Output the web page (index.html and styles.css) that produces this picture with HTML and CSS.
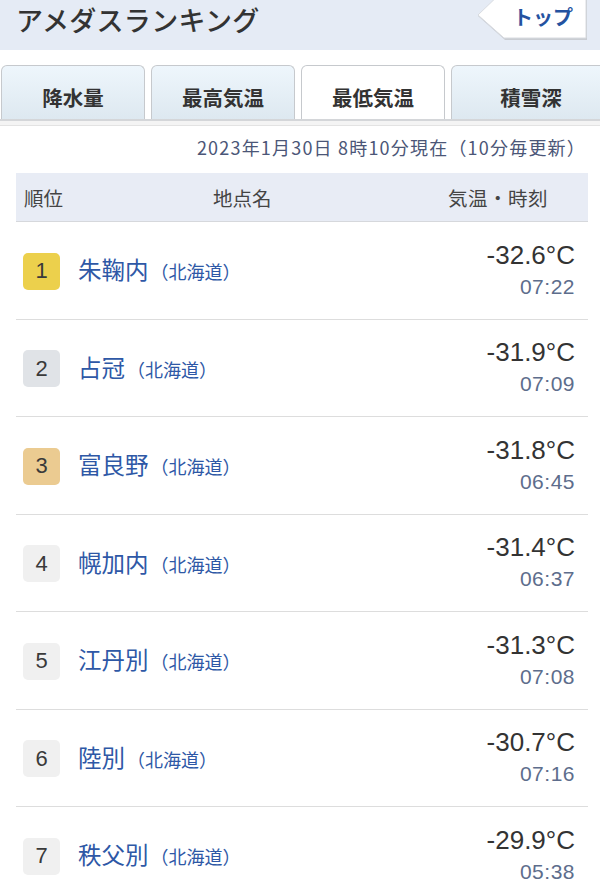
FILE: index.html
```html
<!DOCTYPE html>
<html lang="ja">
<head>
<meta charset="utf-8">
<link rel="stylesheet" href="styles.css">
</head>
<body>
<header class="head">
  <h1 class="title">アメダスランキング</h1>
  <a class="top-btn">
    <svg class="top-shape" width="112" height="52" viewBox="0 0 112 52">
      <polygon points="1,26 28,1 110,1 110,50 28,50" fill="#c9ccd2"/>
      <polygon points="1,25 27,0 109,0 109,48 27,48" fill="#ffffff" stroke="#d8dbe0" stroke-width="1"/>
    </svg>
    <span class="top-text">トップ</span>
  </a>
</header>

<nav class="tabs">
  <div class="tab">降水量</div>
  <div class="tab">最高気温</div>
  <div class="tab active">最低気温</div>
  <div class="tab last">積雪深</div>
</nav>
<div class="tab-under"></div>

<p class="updated">2023年1月30日 8時10分現在（10分毎更新）</p>

<section class="table">
  <div class="thead">
    <span class="th-rank">順位</span>
    <span class="th-name">地点名</span>
    <span class="th-temp">気温・時刻</span>
  </div>

  <div class="row">
    <span class="rank gold">1</span>
    <span class="name">朱鞠内<small class="pref">（北海道）</small></span>
    <span class="val"><span class="temp">-32.6°C</span><span class="time">07:22</span></span>
  </div>
  <div class="row">
    <span class="rank silver">2</span>
    <span class="name">占冠<small class="pref">（北海道）</small></span>
    <span class="val"><span class="temp">-31.9°C</span><span class="time">07:09</span></span>
  </div>
  <div class="row">
    <span class="rank bronze">3</span>
    <span class="name">富良野<small class="pref">（北海道）</small></span>
    <span class="val"><span class="temp">-31.8°C</span><span class="time">06:45</span></span>
  </div>
  <div class="row">
    <span class="rank">4</span>
    <span class="name">幌加内<small class="pref">（北海道）</small></span>
    <span class="val"><span class="temp">-31.4°C</span><span class="time">06:37</span></span>
  </div>
  <div class="row">
    <span class="rank">5</span>
    <span class="name">江丹別<small class="pref">（北海道）</small></span>
    <span class="val"><span class="temp">-31.3°C</span><span class="time">07:08</span></span>
  </div>
  <div class="row">
    <span class="rank">6</span>
    <span class="name">陸別<small class="pref">（北海道）</small></span>
    <span class="val"><span class="temp">-30.7°C</span><span class="time">07:16</span></span>
  </div>
  <div class="row">
    <span class="rank">7</span>
    <span class="name">秩父別<small class="pref">（北海道）</small></span>
    <span class="val"><span class="temp">-29.9°C</span><span class="time">05:38</span></span>
  </div>
</section>
</body>
</html>
```

FILE: styles.css
```css
* { box-sizing: border-box; }
html, body { margin: 0; padding: 0; }
body {
  width: 600px;
  overflow: hidden;
  background: #ffffff;
  font-family: "Noto Sans CJK JP", "Noto Sans", sans-serif;
  color: #333;
}

.head {
  height: 50px;
  background: #e5ebf5;
  display: flex;
  align-items: flex-start;
  justify-content: space-between;
  padding-left: 16px;
  padding-right: 11px;
}
.title {
  margin: 0;
  font-size: 27px;
  font-weight: 500;
  line-height: 40px;
  letter-spacing: 0.3px;
  color: #333;
}
.top-btn {
  position: relative;
  display: block;
  width: 112px;
  height: 52px;
  margin-top: -10px;
}
.top-shape { display: block; }
.top-text {
  position: absolute;
  left: 30px;
  top: 10px;
  width: 72px;
  text-align: center;
  font-size: 20px;
  font-weight: 700;
  line-height: 34px;
  color: #2452a0;
}

.tabs {
  display: flex;
  gap: 6px;
  margin-top: 15px;
  padding-left: 1px;
  height: 54px;
  overflow: hidden;
}
.tab {
  flex: 0 0 144px;
  height: 55px;
  border: 1px solid #c6c9cd;
  border-bottom: none;
  border-radius: 6px 6px 0 0;
  background: linear-gradient(#eef6fc, #dde8f0);
  font-size: 20.5px;
  font-weight: 700;
  color: #333;
  text-align: center;
  line-height: 62px;
}
.tab.active { background: #ffffff; }
.tab.last { flex-basis: 160px; }
.tab-under {
  height: 7px;
  border-top: 2px solid #d4d6d9;
  border-bottom: 1px solid #e3e3e3;
  background: #f4f4f4;
}

.updated {
  margin: 8px 14px 0 0;
  text-align: right;
  font-size: 18px;
  line-height: 26px;
  color: #4b5677;
  letter-spacing: 1.2px;
}

.table {
  margin: 13px 12px 0 16px;
}
.thead {
  display: flex;
  align-items: center;
  height: 49px;
  background: #e8ecf5;
  border-bottom: 1px solid #d6d8dc;
  padding-left: 8px;
  padding-right: 40px;
  font-size: 19.5px;
  color: #444;
}
.th-rank { width: 189px; }
.th-temp { margin-left: auto; letter-spacing: 0.5px; }

.row {
  display: flex;
  align-items: center;
  height: 97.5px;
  border-bottom: 1px solid #dddddd;
  padding-left: 7px;
  padding-right: 13px;
}
.rank {
  flex: 0 0 37px;
  height: 37px;
  border-radius: 5px;
  background: #f0f0f0;
  display: flex;
  align-items: center;
  justify-content: center;
  font-family: "Liberation Sans", "Noto Sans", sans-serif;
  font-size: 22px;
  color: #3a3a3a;
  margin-top: 2px;
}
.rank.gold { background: #ecd04c; }
.rank.silver { background: #e0e3e7; }
.rank.bronze { background: #ebcb91; }
.name {
  margin-left: 18px;
  font-size: 23.5px;
  color: #2e58a6;
  line-height: 30px;
}
.pref {
  font-size: 18px;
  color: #2e58a6;
  margin-left: 2px;
}
.val {
  margin-left: auto;
  display: flex;
  flex-direction: column;
  align-items: flex-end;
  font-family: "Liberation Sans", "Noto Sans", sans-serif;
}
.temp {
  font-size: 26px;
  line-height: 33px;
  color: #333;
  letter-spacing: 0px;
}
.time {
  font-size: 21px;
  line-height: 30px;
  color: #5d6d8c;
  letter-spacing: 0.5px;
}
```
